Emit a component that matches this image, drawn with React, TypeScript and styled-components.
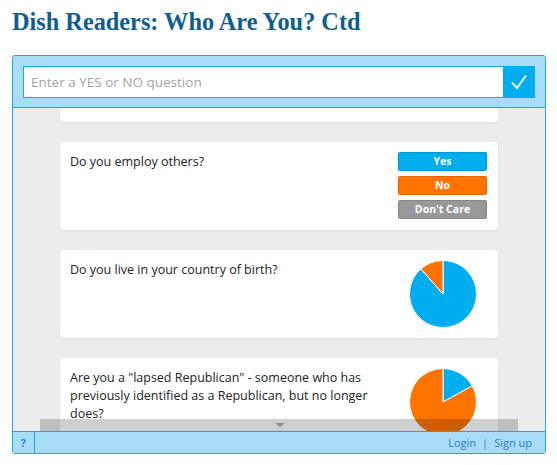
import { useLayoutEffect, useRef } from 'react'
import styled, { createGlobalStyle } from 'styled-components'

const BLUE = '#00aeef'
const ORANGE = '#ff7400'

type Question = {
  text: string
  yes?: number
  vote?: boolean
}

const QUESTIONS: Question[] = [
  { text: 'Do you have children?' },
  { text: 'Do you employ others?', vote: true },
  { text: 'Do you live in your country of birth?', yes: 0.885 },
  {
    text: ' Are you a "lapsed Republican" - someone who has previously identified as a Republican, but no longer does?',
    yes: 0.17,
  },
]

const GlobalStyle = createGlobalStyle`
  html, body { margin: 0; padding: 0; background: #fff; }
  body { font-family: 'Open Sans', 'Noto Sans', sans-serif; }
`

function slicePath(cx: number, cy: number, r: number, from: number, to: number): string {
  const a0 = from * Math.PI * 2
  const a1 = to * Math.PI * 2
  const x0 = cx + r * Math.sin(a0)
  const y0 = cy - r * Math.cos(a0)
  const x1 = cx + r * Math.sin(a1)
  const y1 = cy - r * Math.cos(a1)
  const large = to - from > 0.5 ? 1 : 0
  return `M${cx},${cy} L${x0},${y0} A${r},${r} 0 ${large} 1 ${x1},${y1} Z`
}

function Pie({ yes }: { yes: number }) {
  return (
    <svg width="68" height="68" viewBox="0 0 68 68">
      <path d={slicePath(34, 34, 33.5, 0, yes)} fill={BLUE} stroke="#fff" strokeWidth="1" strokeLinejoin="round" />
      <path d={slicePath(34, 34, 33.5, yes, 1)} fill={ORANGE} stroke="#fff" strokeWidth="1" strokeLinejoin="round" />
    </svg>
  )
}

export default function App() {
  const scrollRef = useRef<HTMLDivElement>(null)

  // the list is shown scrolled a little way down, as in the capture
  useLayoutEffect(() => {
    if (scrollRef.current) scrollRef.current.scrollTop = 74
  }, [])

  return (
    <Page>
      <GlobalStyle />
      <Title>Dish Readers: Who Are You? Ctd</Title>
      <Widget>
        <Header>
          <AskInput placeholder="Enter a YES or NO question" />
          <SubmitButton type="button" aria-label="Submit">
            <svg width="18" height="16" viewBox="0 0 18 16">
              <polyline points="2,8.5 7,14 16,1.5" fill="none" stroke="#fff" strokeWidth="2" />
            </svg>
          </SubmitButton>
        </Header>

        <Body>
          <Scroller ref={scrollRef}>
            <List>
              {QUESTIONS.map(q => (
                <Card key={q.text}>
                  <QuestionText>{q.text}</QuestionText>
                  <Side>
                    {q.vote && (
                      <>
                        <VoteButton $tone={BLUE}>Yes</VoteButton>
                        <VoteButton $tone={ORANGE}>No</VoteButton>
                        <VoteButton $tone="#999999">Don't Care</VoteButton>
                      </>
                    )}
                    {q.yes != null && <Pie yes={q.yes} />}
                  </Side>
                </Card>
              ))}
            </List>
          </Scroller>
          <ScrollHint>
            <Arrow />
          </ScrollHint>
        </Body>

        <Footer>
          <HelpCell>?</HelpCell>
          <FooterLinks>
            <FooterLink href="#">Login</FooterLink>
            <Sep>|</Sep>
            <FooterLink href="#">Sign up</FooterLink>
          </FooterLinks>
        </Footer>
      </Widget>
    </Page>
  )
}

const Page = styled.div`
  padding: 8px 11px 0 12px;
  width: 534px;
`

const Title = styled.h1`
  margin: 0 0 19px;
  font-family: 'Liberation Serif', 'Times New Roman', serif;
  font-size: 24.3px;
  line-height: 28px;
  font-weight: 700;
  color: #0f5d91;
`

const Widget = styled.div`
  display: flex;
  flex-direction: column;
  border: 1px solid #1ba9e6;
  border-radius: 3px;
  overflow: hidden;
`

const Header = styled.div`
  display: flex;
  padding: 10px 10px 9px;
  background: #a8dcf7;
  border-bottom: 1px solid #1ba9e6;
`

const AskInput = styled.input`
  flex: 1;
  height: 32px;
  box-sizing: border-box;
  border: 1px solid #1ba9e6;
  border-right: none;
  padding: 0 7px;
  font-family: 'Open Sans', 'Noto Sans', sans-serif;
  font-size: 13.5px;
  color: #333;
  outline: none;
  box-shadow: inset 0 1px 2px rgba(0, 0, 0, 0.08);
  &::placeholder { color: #a3a3a3; }
`

const SubmitButton = styled.button`
  width: 32px;
  height: 32px;
  border: none;
  padding: 0;
  background: ${BLUE};
  display: flex;
  align-items: center;
  justify-content: center;
  cursor: pointer;
`

const Body = styled.div`
  position: relative;
  height: 323px;
  background: #ececec;
`

const Scroller = styled.div`
  height: 100%;
  overflow: hidden;
`

const List = styled.div`
  display: flex;
  flex-direction: column;
  gap: 20px;
  padding: 0 47px 20px;
`

const Card = styled.div`
  display: flex;
  gap: 12px;
  height: 88px;
  box-sizing: border-box;
  padding: 10px;
  background: #fff;
  border-radius: 4px;
  box-shadow: 0 1px 2px rgba(0, 0, 0, 0.08);
`

const QuestionText = styled.div`
  flex: 1;
  font-size: 12.5px;
  line-height: 18px;
  color: #222;
  padding-top: 1px;
`

const Side = styled.div`
  width: 89px;
  display: flex;
  flex-direction: column;
  align-items: center;
  gap: 5px;
  padding-right: 1px;
`

const VoteButton = styled.button<{ $tone: string }>`
  width: 89px;
  height: 19px;
  padding: 0;
  border: 1px solid rgba(0, 0, 0, 0.12);
  border-radius: 2px;
  background: ${p => p.$tone};
  color: #fff;
  font-family: 'Open Sans', 'Noto Sans', sans-serif;
  font-size: 10.5px;
  font-weight: 700;
  line-height: 17px;
  cursor: pointer;
`

const ScrollHint = styled.div`
  position: absolute;
  left: 27px;
  right: 27px;
  bottom: 0;
  height: 12px;
  background: rgba(0, 0, 0, 0.19);
  display: flex;
  justify-content: center;
  align-items: center;
`

const Arrow = styled.span`
  width: 0;
  height: 0;
  border-left: 5px solid transparent;
  border-right: 5px solid transparent;
  border-top: 4px solid #8e8e8e;
  margin-left: 2px;
`

const Footer = styled.div`
  display: flex;
  align-items: stretch;
  height: 21px;
  background: #a8dcf7;
  border-top: 1px solid #1ba9e6;
`

const HelpCell = styled.div`
  width: 21px;
  border-right: 1px solid #1ba9e6;
  display: flex;
  align-items: center;
  justify-content: center;
  font-size: 10px;
  font-weight: 700;
  color: #2a7fc0;
`

const FooterLinks = styled.div`
  flex: 1;
  display: flex;
  justify-content: flex-end;
  align-items: center;
  gap: 6px;
  padding-right: 13px;
  font-size: 11px;
`

const FooterLink = styled.a`
  color: #2a7fc0;
  text-decoration: none;
`

const Sep = styled.span`
  color: #2a7fc0;
`
